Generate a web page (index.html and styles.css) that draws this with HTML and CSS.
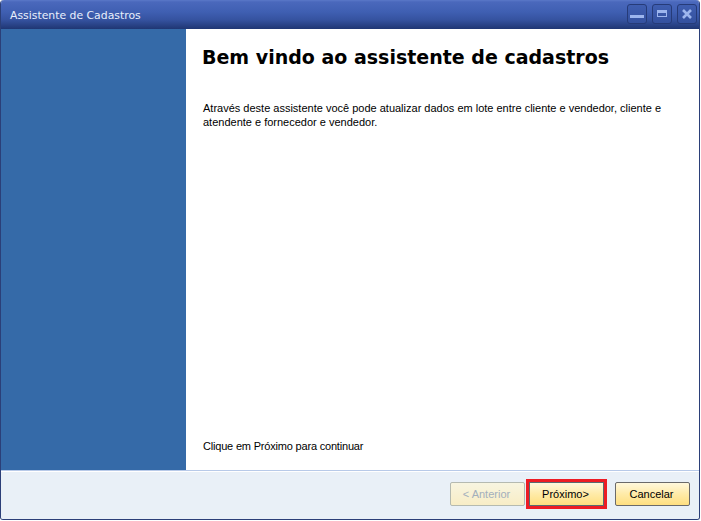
FILE: index.html
```html
<!DOCTYPE html>
<html lang="pt">
<head>
<meta charset="utf-8">
<title>Assistente de Cadastros</title>
<link rel="stylesheet" href="styles.css">
</head>
<body>
<div class="window">
  <header class="titlebar">
    <span class="title">Assistente de Cadastros</span>
    <div class="controls">
      <div class="ctl"><svg width="14" height="14" viewBox="0 0 14 14"><rect x="0" y="8" width="14" height="3" fill="#9db6ee"/></svg></div>
      <div class="ctl"><svg width="14" height="14" viewBox="0 0 14 14"><path d="M2 3h10v7H2z M3 6v3h8V6z" fill="#9db6ee" fill-rule="evenodd"/></svg></div>
      <div class="ctl"><svg width="14" height="14" viewBox="0 0 14 14"><path d="M3 3l8 8M11 3l-8 8" stroke="#9db6ee" stroke-width="2.6" fill="none"/></svg></div>
    </div>
  </header>
  <div class="main">
    <aside class="side"></aside>
    <section class="content">
      <h1>Bem vindo ao assistente de cadastros</h1>
      <p class="intro">Através deste assistente você pode atualizar dados em lote entre cliente e vendedor, cliente e atendente e fornecedor e vendedor.</p>
      <p class="hint">Clique em Próximo para continuar</p>
    </section>
  </div>
  <footer class="footer">
    <button class="btn disabled" disabled>&lt; Anterior</button>
    <button class="btn focus">Próximo&gt;</button>
    <button class="btn">Cancelar</button>
  </footer>
</div>
</body>
</html>
```
FILE: styles.css
```css
html, body { margin: 0; padding: 0; background: #fff; }
body { width: 701px; height: 521px; overflow: hidden; font-family: "Liberation Sans", sans-serif; }
.window { width: 700px; height: 520px; box-sizing: border-box; display: flex; flex-direction: column; border: 1px solid #2b3f78; border-top: 0; border-radius: 4px 4px 3px 3px; overflow: hidden; background: #e9f0f7; }
.titlebar { height: 29px; flex: none; display: flex; align-items: center; justify-content: space-between; padding: 0 2px 0 9px; background: linear-gradient(#5a78c8 0, #4a68bc 2px, #3f5fb2 12px, #35529f 20px, #1f3673 29px); }
.title { color: #e8effc; font: 10.85px "DejaVu Sans", sans-serif; padding-top: 1px; }
.controls { display: flex; gap: 5px; margin-top: -1px; }
.ctl { width: 20px; height: 20px; box-sizing: border-box; border: 1px solid #263b78; border-radius: 3px; display: flex; align-items: center; justify-content: center; background: linear-gradient(#3f5eb0, #34519f); }
.main { height: 441px; flex: none; display: flex; background: #fff; }
.side { width: 185px; flex: none; background: #356aa8; }
.content { flex: 1; display: flex; flex-direction: column; padding: 0 17px; color: #000; }
h1 { margin: 17px 0 0 -1px; font: 700 19px/22px "DejaVu Sans", sans-serif; }
.intro { margin: 33px 0 0; font-size: 11px; line-height: 14px; }
.hint { margin: auto 0 17px; font-size: 11px; line-height: 14px; letter-spacing: -0.19px; }
.footer { flex: 1; display: flex; align-items: flex-start; justify-content: flex-end; border-top: 1px solid #b8cae8; box-shadow: inset 0 1px 0 #fff; background: #e9f0f7; padding: 11px 9px 0 0; }
.btn { width: 75px; height: 24px; padding: 0 2px 0 0; font: 11px "Liberation Sans", sans-serif; color: #000; border: 1px solid #6a6a6a; border-radius: 2px; background: linear-gradient(#fff8dc, #ffeba8 50%, #ffdf80); }
.disabled { color: #a3afbc; border-color: #b5bab0; background: linear-gradient(#f8f5e0, #f8edc6); }
.focus { margin: 0 11px 0 4px; border-color: #5a6a70; border-radius: 0; outline: 3px solid #ed1c24; }
```
